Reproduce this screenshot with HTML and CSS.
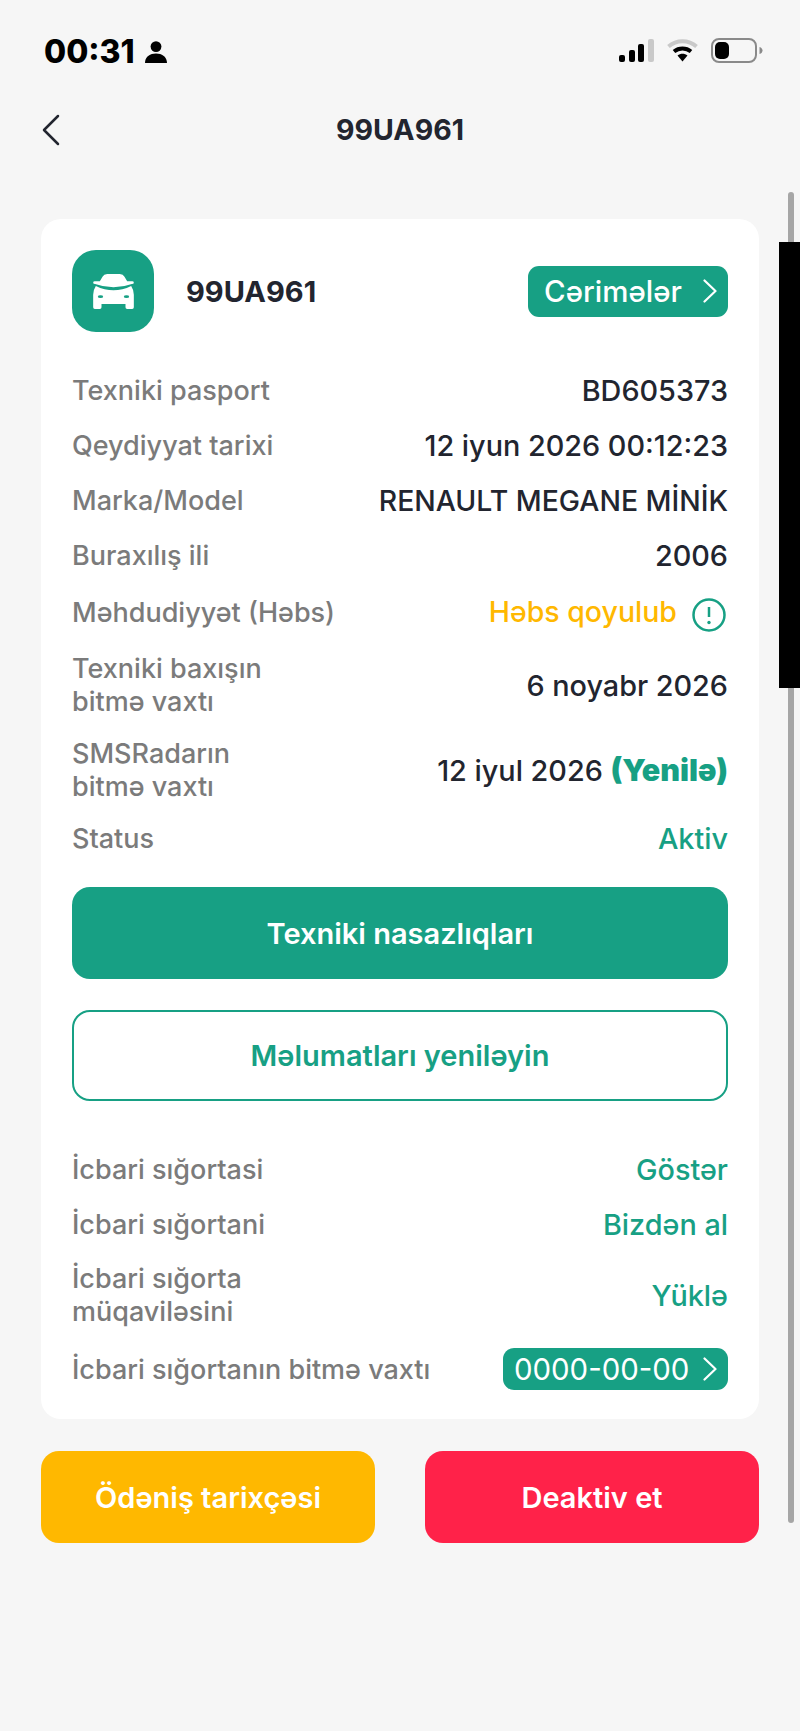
FILE: index.html
```html
<!DOCTYPE html>
<html lang="az">
<head>
<meta charset="utf-8">
<title>99UA961</title>
<link rel="stylesheet" href="styles.css">
</head>
<body>
<div class="page">
  <div class="status">
    <div class="status-left">
      <span class="time">00:31</span>
      <svg class="person" viewBox="0 0 22 22"><circle cx="11" cy="5.6" r="5.4"/><path d="M0.5 22c-0.6 0-0.5-0.6-0.4-1.2C0.8 15.6 5 12.6 11 12.6s10.200 3 10.900 8.200c0.100 0.600 0.200 1.200-0.400 1.200z"/></svg>
    </div>
    <div class="status-right">
      <svg class="signal" viewBox="0 0 35 23"><rect x="0" y="16" width="6" height="7" rx="2"/><rect x="10" y="11" width="6" height="12" rx="2"/><rect x="19" y="5" width="6" height="18" rx="2"/><rect class="dim" x="29" y="0" width="6" height="23" rx="2"/></svg>
      <svg class="wifi" viewBox="0 0 32 24"><path class="dim-stroke" d="M2 8.500C10 1.500 22 1.500 30 8.500"/><path class="on-stroke" d="M7.500 13.500C12.500 9.500 19.500 9.500 24.500 13.500"/><path class="on-fill" d="M11 17.500c3-2.500 7-2.500 10 0l-5 6z"/></svg>
      <svg class="battery" viewBox="0 0 52 25"><rect class="batt-shell" x="1" y="1" width="44" height="23" rx="7"/><rect x="4" y="4" width="14" height="17" rx="5"/><path class="batt-nub" d="M48.500 9c2 0.600 3 2 3 3.500s-1 3-3 3.500z"/></svg>
    </div>
  </div>

  <header class="nav">
    <svg class="back" viewBox="0 0 18 32"><path d="M16 2L2 16l14 14"/></svg>
    <h1 class="nav-title">99UA961</h1>
  </header>

  <main class="content">
    <section class="card">
      <div class="card-head">
        <div class="car-tile">
          <svg class="car" viewBox="0 0 122 105"><path d="M20 22L28 8Q32 0 42 0H80Q90 0 94 8L102 22H117Q122 22 122 26Q122 30 116 30Q61 50 6 30Q0 30 0 26Q0 22 5 22Z"/><path d="M8 36Q61 62 114 36Q122 48 122 62V100Q122 105 117 105H102Q97 105 97 100V90H25V100Q25 105 20 105H5Q0 105 0 100V62Q0 48 8 36Z"/><ellipse class="eye" cx="22" cy="68" rx="8" ry="4"/><ellipse class="eye" cx="100" cy="68" rx="8" ry="4"/></svg>
        </div>
        <div class="plate">99UA961</div>
        <a class="fines">Cərimələr
          <svg class="chev" viewBox="0 0 14 24"><path d="M1.500 1.500L12.500 12L1.500 22.500"/></svg>
        </a>
      </div>

      <div class="rows">
        <div class="row"><span class="label">Texniki pasport</span><span class="value">BD605373</span></div>
        <div class="row"><span class="label">Qeydiyyat tarixi</span><span class="value">12 iyun 2026 00:12:23</span></div>
        <div class="row"><span class="label">Marka/Model</span><span class="value value-caps">RENAULT MEGANE MİNİK</span></div>
        <div class="row"><span class="label">Buraxılış ili</span><span class="value">2006</span></div>
        <div class="row row-limit"><span class="label">Məhdudiyyət (Həbs)</span>
          <span class="value value-warn">Həbs qoyulub
            <svg class="info" viewBox="0 0 34 34"><circle cx="17" cy="17" r="15.500"/><path d="M17 9v10"/><circle class="info-dot" cx="17" cy="24.500" r="1.700"/></svg>
          </span>
        </div>
        <div class="row row-tall row-tall-first"><span class="label">Texniki baxışın<br>bitmə vaxtı</span><span class="value">6 noyabr 2026</span></div>
        <div class="row row-tall"><span class="label">SMSRadarın<br>bitmə vaxtı</span><span class="value">12 iyul 2026 <b class="renew">(Yenilə)</b></span></div>
        <div class="row row-status"><span class="label">Status</span><span class="value value-green">Aktiv</span></div>
      </div>

      <a class="btn btn-solid">Texniki nasazlıqları</a>
      <a class="btn btn-outline">Məlumatları yeniləyin</a>

      <div class="rows rows-ins">
        <div class="row"><span class="label">İcbari sığortasi</span><span class="value value-green">Göstər</span></div>
        <div class="row"><span class="label">İcbari sığortani</span><span class="value value-green">Bizdən al</span></div>
        <div class="row row-mid"><span class="label">İcbari sığorta<br>müqaviləsini</span><span class="value value-green">Yüklə</span></div>
        <div class="row row-last"><span class="label">İcbari sığortanın bitmə vaxtı</span>
          <a class="date-pill">0000-00-00
            <svg class="chev" viewBox="0 0 14 24"><path d="M1.500 1.500L12.500 12L1.500 22.500"/></svg>
          </a>
        </div>
      </div>
    </section>

    <div class="actions">
      <a class="action action-yellow">Ödəniş tarixçəsi</a>
      <a class="action action-red">Deaktiv et</a>
    </div>
  </main>

  <div class="scrollbar"></div>
  <div class="black-bar"></div>
</div>
</body>
</html>
```
FILE: styles.css
```css
* { box-sizing: border-box; }
html, body { margin: 0; padding: 0; }
body {
  background: #f6f6f6;
  font-family: Inter, "Noto Sans", sans-serif;
  color: #22252f;
}
.page {
  position: relative;
  width: 800px;
  height: 1731px;
  overflow: hidden;
}
.status {
  height: 62px;
  padding: 39px 37px 0 44px;
  display: flex;
  justify-content: space-between;
  align-items: flex-start;
}
.status-left { display: flex; align-items: center; gap: 10px; height: 25px; }
.time { font-size: 32px; font-weight: 800; color: #000; line-height: 25px; }
.person { width: 22px; height: 22px; fill: #000; display: block; }
.status-right { display: flex; align-items: flex-start; height: 25px; margin-top: -1px; }
.signal { width: 35px; height: 23px; margin: 1px 0 0 -1px; fill: #000; display: block; }
.dim { fill: #c9c9c9; }
.wifi { width: 33px; height: 24px; margin-left: 12px; display: block; }
.dim-stroke { fill: none; stroke: #c9c9c9; stroke-width: 4; }
.on-stroke { fill: none; stroke: #000; stroke-width: 4; }
.on-fill { fill: #000; }
.battery { width: 52px; height: 25px; margin-left: 12px; display: block; fill: #000; }
.batt-shell { fill: none; stroke: #8a8a8a; stroke-width: 2; }
.batt-nub { fill: #8a8a8a; }

.nav {
  position: relative;
  height: 157px;
  padding-top: 51px;
  display: flex;
  justify-content: center;
  align-items: flex-start;
}
.nav-title { margin: 0; font-size: 28.500px; line-height: 34px; font-weight: 700; color: #22252f; }
.back {
  position: absolute;
  left: 42px;
  top: 52px;
  width: 18px;
  height: 32px;
  fill: none;
  stroke: #22252f;
  stroke-width: 2.500;
  stroke-linecap: round;
  stroke-linejoin: round;
}

.content { padding: 0 41px; }
.card {
  background: #fff;
  border-radius: 20px;
  height: 1200px;
  padding: 31px 31px 0;
}
.card-head { display: flex; align-items: center; height: 82px; }
.car-tile {
  width: 82px;
  height: 82px;
  border-radius: 24px;
  background: #17a084;
  display: flex;
  align-items: center;
  justify-content: center;
}
.car { width: 41px; height: 35px; display: block; fill: #fff; margin-top: 1px; }
.eye { fill: #17a084; }
.plate { margin-left: 32px; font-size: 29px; font-weight: 700; flex: 1; }
.fines {
  width: 200px;
  height: 51px;
  border-radius: 11px;
  background: #17a084;
  color: #fff;
  font-size: 29.500px;
  font-weight: 500;
  display: flex;
  align-items: center;
  justify-content: space-between;
  padding: 0 11px 0 16px;
}
.chev { width: 14px; height: 24px; fill: none; stroke: #fff; stroke-width: 2.200; stroke-linecap: round; stroke-linejoin: round; display: block; }

.rows { display: flex; flex-direction: column; margin-top: 41px; }
.row {
  display: flex;
  justify-content: space-between;
  align-items: center;
  min-height: 35px;
  margin-bottom: 20px;
}
.label { font-size: 27px; line-height: 33px; font-weight: 500; color: #7b7b7b; }
.value { font-size: 28.800px; line-height: 35px; font-weight: 500; color: #22252f; }
.value-caps { font-size: 28.400px; }
.row-limit { min-height: 39px; margin-bottom: 20px; }
.row-tall { min-height: 66px; margin-bottom: 20px; }
.row-tall-first { margin-bottom: 19px; }
.row-status { margin-bottom: 31px; margin-top: -2px; }
.value-warn { color: #ffb800; font-size: 28.500px; display: flex; align-items: flex-start; gap: 15px; padding-right: 2px; }
.value-green { color: #17a084; }
.renew { color: #17a084; font-size: 30.500px; font-weight: 900; }
.info { width: 34px; height: 34px; fill: none; stroke: #17a084; stroke-width: 2.500; display: block; margin-top: 4px; }
.info-dot { fill: #17a084; stroke: none; }

.btn {
  display: flex;
  align-items: center;
  justify-content: center;
  height: 92px;
  border-radius: 18px;
  font-size: 29px;
  font-weight: 600;
}
.btn-solid { background: #17a084; color: #fff; }
.btn-outline { margin-top: 31px; height: 91px; background: #fff; border: 2px solid #17a084; color: #17a084; }

.rows-ins { margin-top: 51px; }
.rows-ins .row { margin-bottom: 20px; }
.rows-ins .row-mid { min-height: 66px; margin-bottom: 20px; }
.rows-ins .row-last { margin-bottom: 0; min-height: 42px; }
.date-pill {
  width: 225px;
  height: 42px;
  border-radius: 11px;
  background: #17a084;
  color: #fff;
  font-size: 29.400px;
  font-weight: 400;
  display: flex;
  align-items: center;
  justify-content: space-between;
  padding: 0 11px 0 11px;
}

.actions { display: flex; justify-content: space-between; margin-top: 32px; }
.action {
  width: 334px;
  height: 92px;
  border-radius: 18px;
  display: flex;
  align-items: center;
  justify-content: center;
  color: #fff;
  font-size: 29px;
  font-weight: 600;
}
.action-yellow { background: #ffb800; }
.action-red { background: #ff2249; }

.scrollbar {
  position: absolute;
  left: 788px;
  top: 192px;
  width: 6px;
  height: 1331px;
  border-radius: 3px;
  background: #a6a6a6;
}
.black-bar {
  position: absolute;
  left: 779px;
  top: 242px;
  width: 21px;
  height: 446px;
  background: #000;
}
```
